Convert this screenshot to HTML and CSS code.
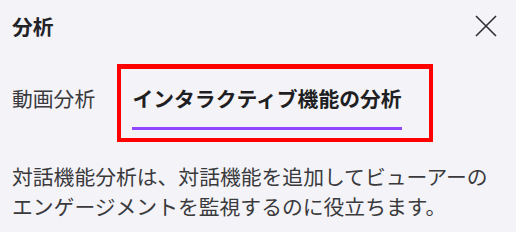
FILE: index.html
```html
<!DOCTYPE html>
<html lang="ja">
<head>
<meta charset="utf-8">
<link rel="stylesheet" href="styles.css">
</head>
<body>
<div class="panel">
  <div class="header">
    <h1 class="title">分析</h1>
    <button class="close" aria-label="閉じる">
      <svg width="22" height="22" viewBox="0 0 22 22"><path d="M1 1 L21 21 M21 1 L1 21" stroke="#2e2e33" stroke-width="1.6" fill="none"/></svg>
    </button>
  </div>
  <div class="tabs">
    <div class="tab">動画分析</div>
    <div class="tab active">インタラクティブ機能の分析<span class="highlight"></span></div>
  </div>
  <p class="desc">対話機能分析は、対話機能を追加してビューアーのエンゲージメントを監視するのに役立ちます。</p>
</div>
</body>
</html>
```
FILE: styles.css
```css
html, body {
  margin: 0;
  padding: 0;
  background: #f4f4f8;
}
.panel {
  font-family: "Noto Sans CJK JP", sans-serif;
  font-size: 20.8px;
  color: #3a3a3d;
  padding: 11px 19px 0 12px;
}
.header {
  display: flex;
  align-items: center;
  justify-content: space-between;
  height: 30px;
}
.title {
  margin: 0;
  font-size: 20.8px;
  font-weight: 700;
  line-height: 30px;
  color: #232327;
}
.close {
  border: 0;
  padding: 0;
  background: none;
  width: 22px;
  height: 22px;
  display: flex;
}
.tabs {
  display: flex;
  gap: 37.3px;
  margin-top: 42px;
}
.tab {
  position: relative;
  line-height: 30px;
  padding-bottom: 14px;
  color: #3a3a3d;
}
.tab.active {
  font-weight: 700;
  color: #1f1f23;
  border-bottom: 3px solid #9147ff;
}
.highlight {
  position: absolute;
  left: -15.5px;
  top: -19px;
  width: 316px;
  height: 78px;
  box-sizing: border-box;
  border: 4px solid #ff0000;
  border-top-width: 5px;
}
.desc {
  margin: 31px 0 0 0;
  padding-right: 0;
  line-height: 30px;
  color: #3a3a3d;
}
```
